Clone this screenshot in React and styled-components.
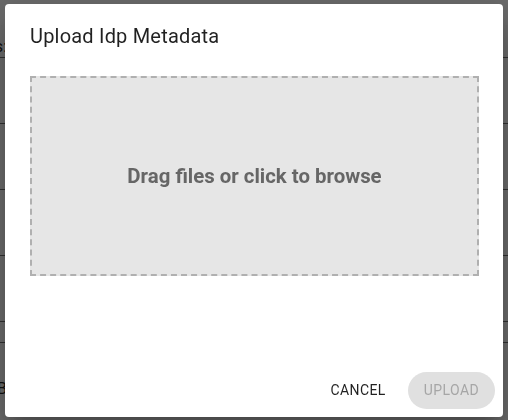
import React from "react";
import styled, { createGlobalStyle } from "styled-components";

const GlobalStyle = createGlobalStyle`
  html, body {
    margin: 0;
    padding: 0;
    width: 508px;
    height: 420px;
    overflow: hidden;
    font-family: Roboto, "Liberation Sans", sans-serif;
  }
`;

const Page = styled.div`
  width: 508px;
  height: 420px;
  background: #d6d6d6;
  padding-top: 36px;
  box-sizing: border-box;
`;

const Row = styled.div`
  height: ${(p) => p.h}px;
  display: flex;
  align-items: center;
  border-bottom: ${(p) => (p.line ? "1px solid #606060" : "none")};
  box-sizing: border-box;
`;

const Label = styled.div`
  width: 7px;
  display: flex;
  justify-content: flex-end;
  white-space: nowrap;
  font-size: 16px;
  color: #222;
`;

const Backdrop = styled.div`
  position: fixed;
  inset: 0;
  background: rgba(0, 0, 0, 0.5);
  display: flex;
  align-items: center;
  justify-content: center;
`;

const Dialog = styled.div`
  width: 498px;
  height: 413px;
  background: #fff;
  border-radius: 4px;
  box-shadow: 0px 11px 15px -7px rgba(0, 0, 0, 0.2),
    0px 24px 38px 3px rgba(0, 0, 0, 0.14), 0px 9px 46px 8px rgba(0, 0, 0, 0.12);
  display: flex;
  flex-direction: column;
  box-sizing: border-box;
`;

const Title = styled.h2`
  margin: 0;
  padding: 16px 24px 16px 25px;
  font-size: 20px;
  font-weight: 400;
  line-height: 32px;
  letter-spacing: 0.01em;
  color: rgba(0, 0, 0, 0.87);
`;

const Content = styled.div`
  flex: 1;
  padding: 8px 24px 8px 25px;
`;

const DropZone = styled.div`
  height: 200px;
  box-sizing: border-box;
  border: 2px dashed #b0b0b0;
  background: #e6e6e6;
  display: flex;
  align-items: center;
  justify-content: center;
  cursor: pointer;
`;

const DropText = styled.span`
  font-size: 20.4px;
  font-weight: 700;
  color: #666;
`;

const Actions = styled.div`
  display: flex;
  justify-content: flex-end;
  align-items: center;
  gap: 6px;
  padding: 8px;
`;

const Button = styled.button`
  font-family: Roboto, "Liberation Sans", sans-serif;
  font-size: 14px;
  font-weight: 400;
  letter-spacing: 0.02857em;
  text-transform: uppercase;
  height: 37px;
  padding: 0 16px;
  border: none;
  outline: none;
  border-radius: ${(p) => (p.pill ? "19px" : "4px")};
  background: ${(p) => (p.pill ? "#e0e0e0" : "transparent")};
  color: ${(p) => (p.disabled ? "#a6a6a6" : "rgba(0, 0, 0, 0.87)")};
  cursor: ${(p) => (p.disabled ? "default" : "pointer")};
`;

export default function App() {
  return (
    <>
      <GlobalStyle />
      <Page>
        <Row h={22} line>
          <Label>Actions:</Label>
        </Row>
        <Row h={66} line />
        <Row h={66} line />
        <Row h={66} line />
        <Row h={66} line />
        <Row h={21} line />
        <Row h={90}>
          <Label>B</Label>
        </Row>
      </Page>
      <Backdrop>
        <Dialog>
          <Title>Upload Idp Metadata</Title>
          <Content>
            <DropZone>
              <DropText>Drag files or click to browse</DropText>
            </DropZone>
          </Content>
          <Actions>
            <Button>Cancel</Button>
            <Button pill disabled>
              Upload
            </Button>
          </Actions>
        </Dialog>
      </Backdrop>
    </>
  );
}
